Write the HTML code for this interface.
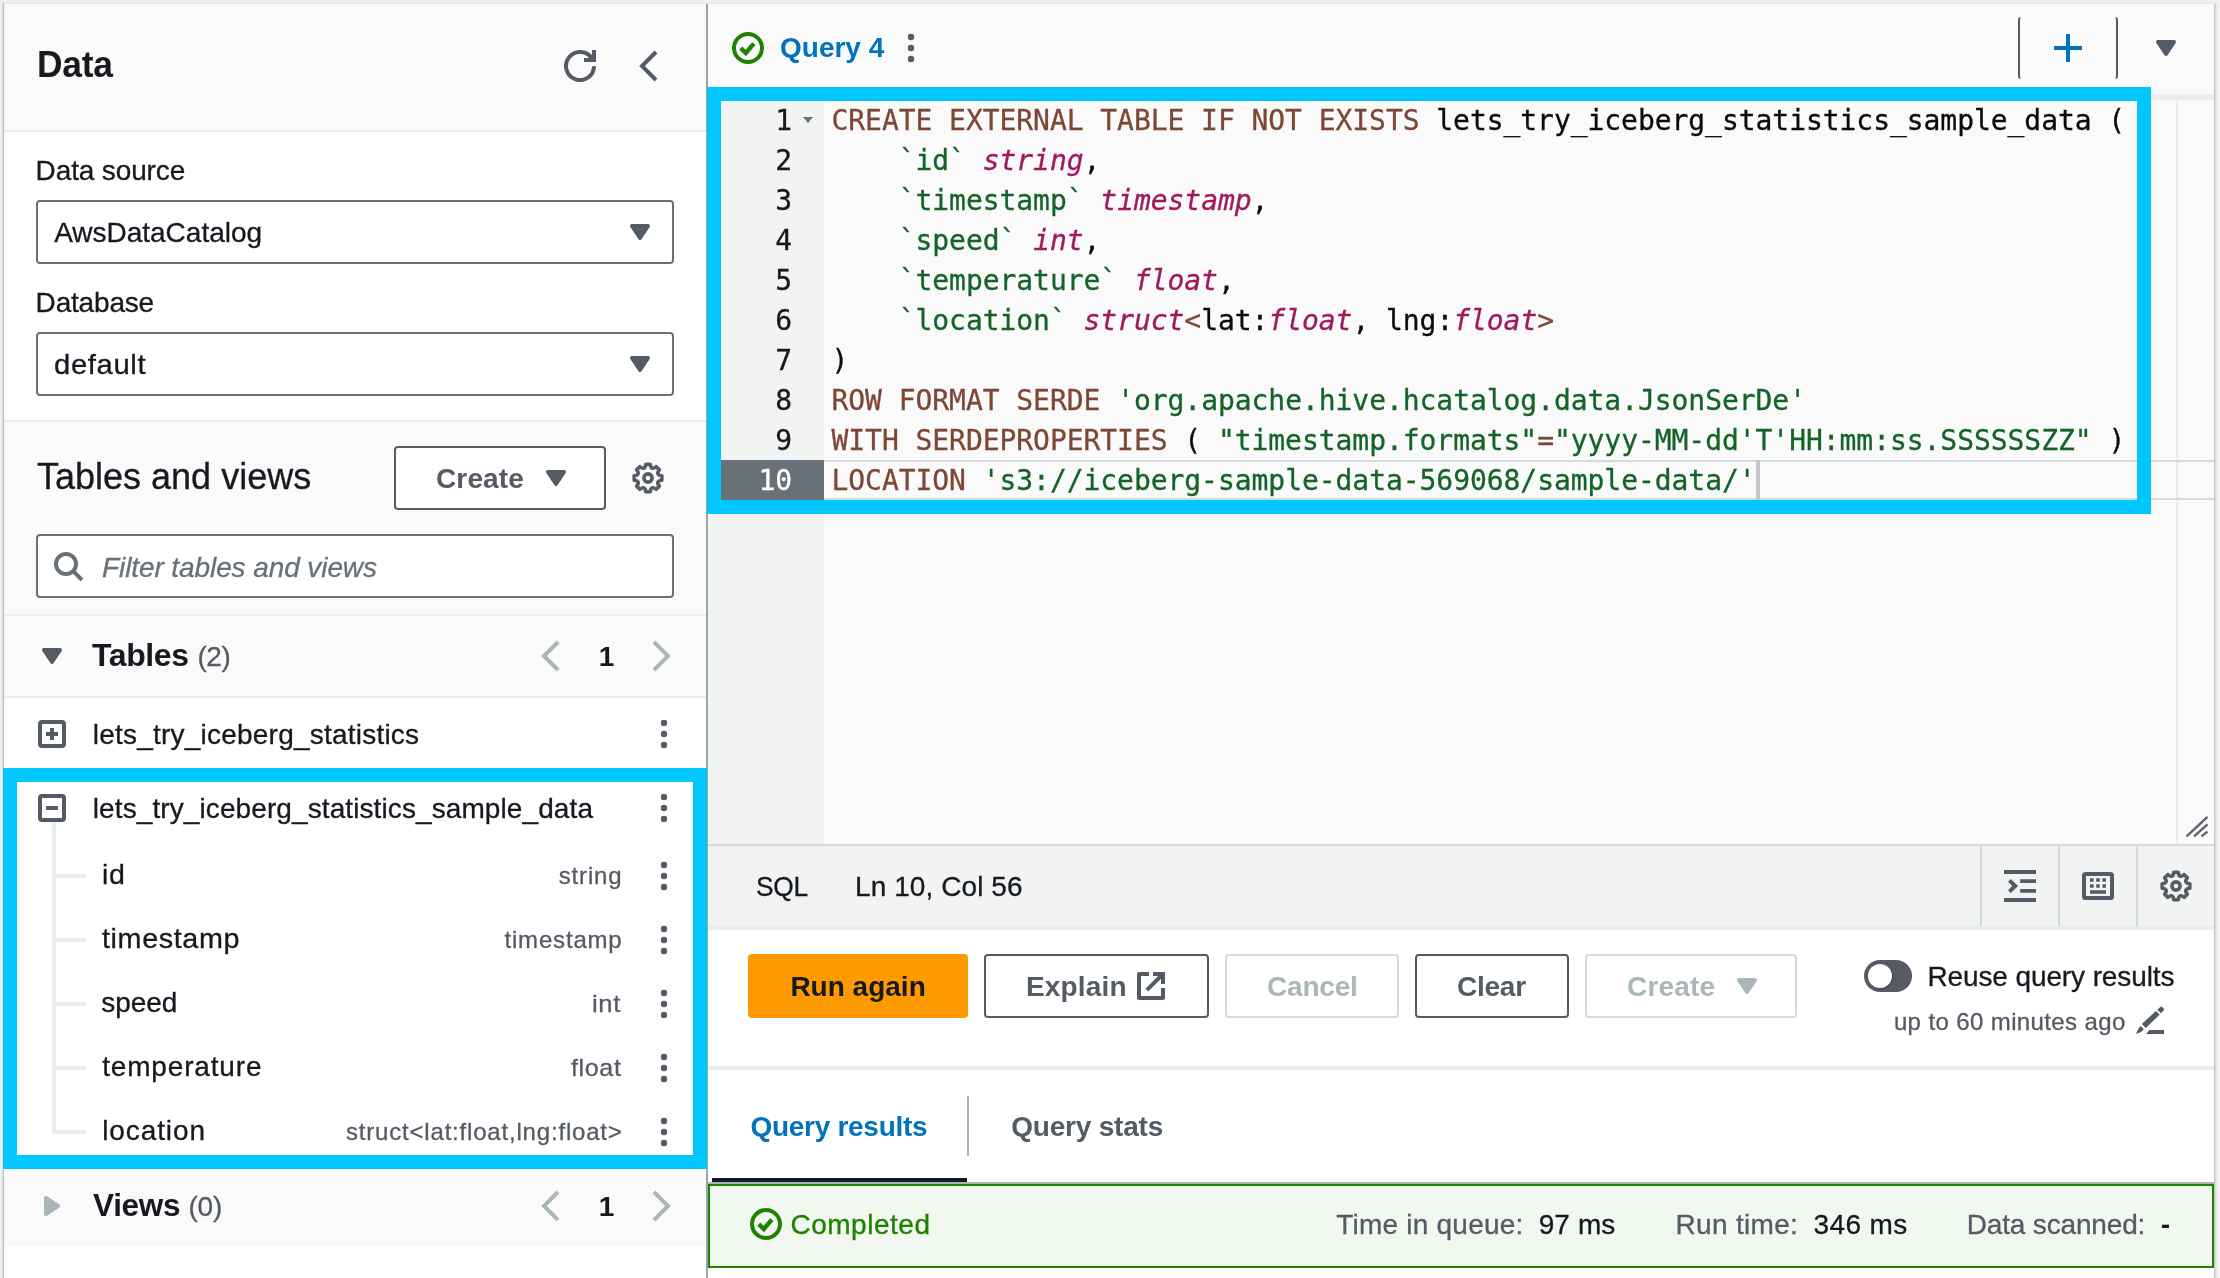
<!DOCTYPE html>
<html lang="en"><head><meta charset="utf-8"><title>Athena query editor</title>
<style>
html,body{margin:0;padding:0}
body{width:2220px;height:1278px;position:relative;overflow:hidden;background:#f0f1f1;font-family:'Liberation Sans', sans-serif}
#app{position:absolute;left:0;top:0;width:2220px;height:1278px;overflow:hidden;will-change:transform;transform:translateZ(0)}
#app>div,#app>svg{position:absolute;box-sizing:border-box}
.t{white-space:pre}
</style></head><body><div id="app">
<div style="left:3px;top:2px;width:2213px;height:2px;background:#e9ebeb"></div>
<div style="left:0px;top:3px;width:4px;height:1275px;background:linear-gradient(90deg,#f0f1f1 0,#eef0f0 1.5px,#dde0e0 2.5px,#b9c0c0 3.5px)"></div>
<div style="left:4px;top:4px;width:702px;height:1274px;background:#fff"></div>
<div style="left:4px;top:4px;width:702px;height:126px;background:#fafafa"></div>
<div style="left:4px;top:130px;width:702px;height:2px;background:#eaeded"></div>
<div style="left:4px;top:420px;width:702px;height:2px;background:#eaeded"></div>
<div style="left:4px;top:422px;width:702px;height:192px;background:#fafafa"></div>
<div style="left:4px;top:614px;width:702px;height:2px;background:#eaeded"></div>
<div style="left:4px;top:616px;width:702px;height:80px;background:#fafafa"></div>
<div style="left:4px;top:696px;width:702px;height:2px;background:#eaeded"></div>
<div style="left:4px;top:1169px;width:702px;height:77px;background:#fafafa"></div>
<div style="left:706px;top:4px;width:2px;height:1274px;background:#9ba7a7"></div>
<svg style="left:564px;top:50px" width="32" height="32" viewBox="0 0 16 16" ><path d="M15 8.1A7 7 0 1 1 14.06 4.5" fill="none" stroke="#545b64" stroke-width="2"/><path d="M15 0v5h-5" fill="none" stroke="#545b64" stroke-width="2"/></svg>
<svg style="left:632px;top:50px" width="32" height="32" viewBox="0 0 16 16" ><path d="M12 1 5 8l7 7" fill="none" stroke="#545b64" stroke-width="2" stroke-linejoin="miter"/></svg>
<div style="left:36px;top:200px;width:638px;height:64px;background:#fff;border:2px solid #687078;border-radius:4px"></div>
<svg style="left:624px;top:216px" width="32" height="32" viewBox="0 0 16 16" ><path d="M4 5h8l-4 6z" fill="#545b64" stroke="#545b64" stroke-width="2" stroke-linejoin="round"/></svg>
<div style="left:36px;top:332px;width:638px;height:64px;background:#fff;border:2px solid #687078;border-radius:4px"></div>
<svg style="left:624px;top:348px" width="32" height="32" viewBox="0 0 16 16" ><path d="M4 5h8l-4 6z" fill="#545b64" stroke="#545b64" stroke-width="2" stroke-linejoin="round"/></svg>
<div style="left:394px;top:446px;width:212px;height:64px;background:#fff;border:2px solid #545b64;border-radius:4px"></div>
<svg style="left:540px;top:462px" width="32" height="32" viewBox="0 0 16 16" ><path d="M4 5h8l-4 6z" fill="#545b64" stroke="#545b64" stroke-width="2" stroke-linejoin="round"/></svg>
<svg style="left:632px;top:462px" width="32" height="32" viewBox="0 0 16 16" ><path d="M6.90 1.09L9.10 1.09Q9.49 4.40 12.11 2.34L13.66 3.89Q11.60 6.51 14.91 6.90L14.91 9.10Q11.60 9.49 13.66 12.11L12.11 13.66Q9.49 11.60 9.10 14.91L6.90 14.91Q6.51 11.60 3.89 13.66L2.34 12.11Q4.40 9.49 1.09 9.10L1.09 6.90Q4.40 6.51 2.34 3.89L3.89 2.34Q6.51 4.40 6.90 1.09Z" fill="none" stroke="#545b64" stroke-width="1.8" stroke-linejoin="round"/><circle cx="8" cy="8" r="2.05" fill="none" stroke="#545b64" stroke-width="1.8"/></svg>
<div style="left:36px;top:534px;width:638px;height:64px;background:#fff;border:2px solid #687078;border-radius:4px"></div>
<svg style="left:52px;top:550px" width="32" height="32" viewBox="0 0 16 16" ><circle cx="7" cy="7" r="5" fill="none" stroke="#687078" stroke-width="2"/><path d="m10.6 10.6 4.4 4.4" stroke="#687078" stroke-width="2" fill="none"/></svg>
<svg style="left:36px;top:640px" width="32" height="32" viewBox="0 0 16 16" ><path d="M4 5h8l-4 6z" fill="#545b64" stroke="#545b64" stroke-width="2" stroke-linejoin="round"/></svg>
<svg style="left:534px;top:640px" width="32" height="32" viewBox="0 0 16 16" ><path d="M12 1 5 8l7 7" fill="none" stroke="#aab7b8" stroke-width="2"/></svg>
<svg style="left:646px;top:640px" width="32" height="32" viewBox="0 0 16 16" ><path d="M4 1l7 7-7 7" fill="none" stroke="#aab7b8" stroke-width="2"/></svg>
<svg style="left:38px;top:720px" width="28" height="28" viewBox="0 0 28 28" ><rect x="2" y="2" width="24" height="24" rx="2" fill="#fff" stroke="#545b64" stroke-width="4"/><path d="M8 14h12M14 8v12" stroke="#545b64" stroke-width="4" fill="none"/></svg>
<svg style="left:660px;top:718px" width="8" height="32" viewBox="0 0 8 32" ><circle cx="4" cy="5" r="3.2" fill="#545b64"/><circle cx="4" cy="16" r="3.2" fill="#545b64"/><circle cx="4" cy="27" r="3.2" fill="#545b64"/></svg>
<div style="left:52px;top:822px;width:4px;height:312px;background:#eaeded"></div>
<div style="left:52px;top:874px;width:34px;height:4px;background:#eaeded"></div>
<div style="left:52px;top:938px;width:34px;height:4px;background:#eaeded"></div>
<div style="left:52px;top:1002px;width:34px;height:4px;background:#eaeded"></div>
<div style="left:52px;top:1066px;width:34px;height:4px;background:#eaeded"></div>
<div style="left:52px;top:1130px;width:34px;height:4px;background:#eaeded"></div>
<svg style="left:38px;top:794px" width="28" height="28" viewBox="0 0 28 28" ><rect x="2" y="2" width="24" height="24" rx="2" fill="#fff" stroke="#545b64" stroke-width="4"/><path d="M8 14h12" stroke="#545b64" stroke-width="4" fill="none"/></svg>
<svg style="left:660px;top:792px" width="8" height="32" viewBox="0 0 8 32" ><circle cx="4" cy="5" r="3.2" fill="#545b64"/><circle cx="4" cy="16" r="3.2" fill="#545b64"/><circle cx="4" cy="27" r="3.2" fill="#545b64"/></svg>
<svg style="left:660px;top:860px" width="8" height="32" viewBox="0 0 8 32" ><circle cx="4" cy="5" r="3.2" fill="#545b64"/><circle cx="4" cy="16" r="3.2" fill="#545b64"/><circle cx="4" cy="27" r="3.2" fill="#545b64"/></svg>
<svg style="left:660px;top:924px" width="8" height="32" viewBox="0 0 8 32" ><circle cx="4" cy="5" r="3.2" fill="#545b64"/><circle cx="4" cy="16" r="3.2" fill="#545b64"/><circle cx="4" cy="27" r="3.2" fill="#545b64"/></svg>
<svg style="left:660px;top:988px" width="8" height="32" viewBox="0 0 8 32" ><circle cx="4" cy="5" r="3.2" fill="#545b64"/><circle cx="4" cy="16" r="3.2" fill="#545b64"/><circle cx="4" cy="27" r="3.2" fill="#545b64"/></svg>
<svg style="left:660px;top:1052px" width="8" height="32" viewBox="0 0 8 32" ><circle cx="4" cy="5" r="3.2" fill="#545b64"/><circle cx="4" cy="16" r="3.2" fill="#545b64"/><circle cx="4" cy="27" r="3.2" fill="#545b64"/></svg>
<svg style="left:660px;top:1116px" width="8" height="32" viewBox="0 0 8 32" ><circle cx="4" cy="5" r="3.2" fill="#545b64"/><circle cx="4" cy="16" r="3.2" fill="#545b64"/><circle cx="4" cy="27" r="3.2" fill="#545b64"/></svg>
<svg style="left:36px;top:1190px" width="32" height="32" viewBox="0 0 16 16" ><path d="M5 4v8l6-4z" fill="#aab7b8" stroke="#aab7b8" stroke-width="2" stroke-linejoin="round"/></svg>
<svg style="left:534px;top:1190px" width="32" height="32" viewBox="0 0 16 16" ><path d="M12 1 5 8l7 7" fill="none" stroke="#aab7b8" stroke-width="2"/></svg>
<svg style="left:646px;top:1190px" width="32" height="32" viewBox="0 0 16 16" ><path d="M4 1l7 7-7 7" fill="none" stroke="#aab7b8" stroke-width="2"/></svg>
<div style="left:708px;top:4px;width:1506px;height:1274px;background:#fff"></div>
<div style="left:708px;top:4px;width:1506px;height:90px;background:#fafafa"></div>
<div style="left:708px;top:94px;width:1506px;height:6px;background:#eaeded"></div>
<svg style="left:732px;top:32px" width="32" height="32" viewBox="0 0 16 16" ><circle cx="8" cy="8" r="7" fill="none" stroke="#1d8102" stroke-width="2"/><path d="M4.4 8.1 6.9 10.5 10.9 5.8" fill="none" stroke="#1d8102" stroke-width="2.2"/></svg>
<svg style="left:907px;top:32px" width="8" height="32" viewBox="0 0 8 32" ><circle cx="4" cy="5" r="3.2" fill="#545b64"/><circle cx="4" cy="16" r="3.2" fill="#545b64"/><circle cx="4" cy="27" r="3.2" fill="#545b64"/></svg>
<div style="left:2018px;top:17px;width:100px;height:62px;border-left:2px solid #545b64;border-right:2px solid #545b64;border-radius:3px"></div>
<svg style="left:2052px;top:32px" width="32" height="32" viewBox="0 0 16 16" ><path d="M8 1v14M1 8h14" stroke="#0073bb" stroke-width="2" fill="none"/></svg>
<svg style="left:2150px;top:32px" width="32" height="32" viewBox="0 0 16 16" ><path d="M4 5h8l-4 6z" fill="#545b64" stroke="#545b64" stroke-width="2" stroke-linejoin="round"/></svg>
<div style="left:708px;top:100px;width:1506px;height:744px;background:#fafafa"></div>
<div style="left:708px;top:100px;width:116px;height:744px;background:#f2f3f3"></div>
<div style="left:2176px;top:100px;width:2px;height:744px;background:#eaeded"></div>
<div style="left:708px;top:460px;width:116px;height:40px;background:#687078"></div>
<div style="left:824px;top:460px;width:1390px;height:2px;background:#d5dbdb"></div>
<div style="left:824px;top:498px;width:1390px;height:2px;background:#d5dbdb"></div>
<div style="left:1756px;top:460px;width:4px;height:40px;background:#c4c7ca"></div>
<div style="left:831.5px;top:101px;height:40px;line-height:40px;white-space:pre;font-family:'DejaVu Sans Mono', 'Liberation Mono', monospace;font-size:28px;letter-spacing:-0.057px;-webkit-text-stroke:0.3px;transform:scaleY(1.03);transform-origin:0 29.7px"><span style="color:#7d4734;">CREATE EXTERNAL TABLE IF NOT EXISTS</span><span style="color:#0b0b0b;"> lets_try_iceberg_statistics_sample_data (</span></div>
<div style="left:720px;top:101px;width:72px;height:40px;line-height:40px;text-align:right;white-space:pre;font-family:'DejaVu Sans Mono', 'Liberation Mono', monospace;font-size:28px;letter-spacing:-0.057px;-webkit-text-stroke:0.3px;transform:scaleY(1.03);transform-origin:0 29.7px;color:#16191f">1</div>
<div style="left:831.5px;top:141px;height:40px;line-height:40px;white-space:pre;font-family:'DejaVu Sans Mono', 'Liberation Mono', monospace;font-size:28px;letter-spacing:-0.057px;-webkit-text-stroke:0.3px;transform:scaleY(1.03);transform-origin:0 29.7px"><span style="color:#146428;">    `id`</span><span style="color:#0b0b0b;"> </span><span style="color:#a0195a;font-style:italic;">string</span><span style="color:#0b0b0b;">,</span></div>
<div style="left:720px;top:141px;width:72px;height:40px;line-height:40px;text-align:right;white-space:pre;font-family:'DejaVu Sans Mono', 'Liberation Mono', monospace;font-size:28px;letter-spacing:-0.057px;-webkit-text-stroke:0.3px;transform:scaleY(1.03);transform-origin:0 29.7px;color:#16191f">2</div>
<div style="left:831.5px;top:181px;height:40px;line-height:40px;white-space:pre;font-family:'DejaVu Sans Mono', 'Liberation Mono', monospace;font-size:28px;letter-spacing:-0.057px;-webkit-text-stroke:0.3px;transform:scaleY(1.03);transform-origin:0 29.7px"><span style="color:#146428;">    `timestamp`</span><span style="color:#0b0b0b;"> </span><span style="color:#a0195a;font-style:italic;">timestamp</span><span style="color:#0b0b0b;">,</span></div>
<div style="left:720px;top:181px;width:72px;height:40px;line-height:40px;text-align:right;white-space:pre;font-family:'DejaVu Sans Mono', 'Liberation Mono', monospace;font-size:28px;letter-spacing:-0.057px;-webkit-text-stroke:0.3px;transform:scaleY(1.03);transform-origin:0 29.7px;color:#16191f">3</div>
<div style="left:831.5px;top:221px;height:40px;line-height:40px;white-space:pre;font-family:'DejaVu Sans Mono', 'Liberation Mono', monospace;font-size:28px;letter-spacing:-0.057px;-webkit-text-stroke:0.3px;transform:scaleY(1.03);transform-origin:0 29.7px"><span style="color:#146428;">    `speed`</span><span style="color:#0b0b0b;"> </span><span style="color:#a0195a;font-style:italic;">int</span><span style="color:#0b0b0b;">,</span></div>
<div style="left:720px;top:221px;width:72px;height:40px;line-height:40px;text-align:right;white-space:pre;font-family:'DejaVu Sans Mono', 'Liberation Mono', monospace;font-size:28px;letter-spacing:-0.057px;-webkit-text-stroke:0.3px;transform:scaleY(1.03);transform-origin:0 29.7px;color:#16191f">4</div>
<div style="left:831.5px;top:261px;height:40px;line-height:40px;white-space:pre;font-family:'DejaVu Sans Mono', 'Liberation Mono', monospace;font-size:28px;letter-spacing:-0.057px;-webkit-text-stroke:0.3px;transform:scaleY(1.03);transform-origin:0 29.7px"><span style="color:#146428;">    `temperature`</span><span style="color:#0b0b0b;"> </span><span style="color:#a0195a;font-style:italic;">float</span><span style="color:#0b0b0b;">,</span></div>
<div style="left:720px;top:261px;width:72px;height:40px;line-height:40px;text-align:right;white-space:pre;font-family:'DejaVu Sans Mono', 'Liberation Mono', monospace;font-size:28px;letter-spacing:-0.057px;-webkit-text-stroke:0.3px;transform:scaleY(1.03);transform-origin:0 29.7px;color:#16191f">5</div>
<div style="left:831.5px;top:301px;height:40px;line-height:40px;white-space:pre;font-family:'DejaVu Sans Mono', 'Liberation Mono', monospace;font-size:28px;letter-spacing:-0.057px;-webkit-text-stroke:0.3px;transform:scaleY(1.03);transform-origin:0 29.7px"><span style="color:#146428;">    `location`</span><span style="color:#0b0b0b;"> </span><span style="color:#a0195a;font-style:italic;">struct</span><span style="color:#7d4734;">&lt;</span><span style="color:#0b0b0b;">lat:</span><span style="color:#a0195a;font-style:italic;">float</span><span style="color:#0b0b0b;">, lng:</span><span style="color:#a0195a;font-style:italic;">float</span><span style="color:#7d4734;">&gt;</span></div>
<div style="left:720px;top:301px;width:72px;height:40px;line-height:40px;text-align:right;white-space:pre;font-family:'DejaVu Sans Mono', 'Liberation Mono', monospace;font-size:28px;letter-spacing:-0.057px;-webkit-text-stroke:0.3px;transform:scaleY(1.03);transform-origin:0 29.7px;color:#16191f">6</div>
<div style="left:831.5px;top:341px;height:40px;line-height:40px;white-space:pre;font-family:'DejaVu Sans Mono', 'Liberation Mono', monospace;font-size:28px;letter-spacing:-0.057px;-webkit-text-stroke:0.3px;transform:scaleY(1.03);transform-origin:0 29.7px"><span style="color:#0b0b0b;">)</span></div>
<div style="left:720px;top:341px;width:72px;height:40px;line-height:40px;text-align:right;white-space:pre;font-family:'DejaVu Sans Mono', 'Liberation Mono', monospace;font-size:28px;letter-spacing:-0.057px;-webkit-text-stroke:0.3px;transform:scaleY(1.03);transform-origin:0 29.7px;color:#16191f">7</div>
<div style="left:831.5px;top:381px;height:40px;line-height:40px;white-space:pre;font-family:'DejaVu Sans Mono', 'Liberation Mono', monospace;font-size:28px;letter-spacing:-0.057px;-webkit-text-stroke:0.3px;transform:scaleY(1.03);transform-origin:0 29.7px"><span style="color:#7d4734;">ROW FORMAT SERDE</span><span style="color:#0b0b0b;"> </span><span style="color:#146428;">&#x27;org.apache.hive.hcatalog.data.JsonSerDe&#x27;</span></div>
<div style="left:720px;top:381px;width:72px;height:40px;line-height:40px;text-align:right;white-space:pre;font-family:'DejaVu Sans Mono', 'Liberation Mono', monospace;font-size:28px;letter-spacing:-0.057px;-webkit-text-stroke:0.3px;transform:scaleY(1.03);transform-origin:0 29.7px;color:#16191f">8</div>
<div style="left:831.5px;top:421px;height:40px;line-height:40px;white-space:pre;font-family:'DejaVu Sans Mono', 'Liberation Mono', monospace;font-size:28px;letter-spacing:-0.057px;-webkit-text-stroke:0.3px;transform:scaleY(1.03);transform-origin:0 29.7px"><span style="color:#7d4734;">WITH SERDEPROPERTIES</span><span style="color:#0b0b0b;"> ( </span><span style="color:#146428;">&quot;timestamp.formats&quot;</span><span style="color:#7d4734;">=</span><span style="color:#146428;">&quot;yyyy-MM-dd&#x27;T&#x27;HH:mm:ss.SSSSSSZZ&quot;</span><span style="color:#0b0b0b;"> )</span></div>
<div style="left:720px;top:421px;width:72px;height:40px;line-height:40px;text-align:right;white-space:pre;font-family:'DejaVu Sans Mono', 'Liberation Mono', monospace;font-size:28px;letter-spacing:-0.057px;-webkit-text-stroke:0.3px;transform:scaleY(1.03);transform-origin:0 29.7px;color:#16191f">9</div>
<div style="left:831.5px;top:461px;height:40px;line-height:40px;white-space:pre;font-family:'DejaVu Sans Mono', 'Liberation Mono', monospace;font-size:28px;letter-spacing:-0.057px;-webkit-text-stroke:0.3px;transform:scaleY(1.03);transform-origin:0 29.7px"><span style="color:#7d4734;">LOCATION</span><span style="color:#0b0b0b;"> </span><span style="color:#146428;">&#x27;s3://iceberg-sample-data-569068/sample-data/&#x27;</span></div>
<div style="left:720px;top:461px;width:72px;height:40px;line-height:40px;text-align:right;white-space:pre;font-family:'DejaVu Sans Mono', 'Liberation Mono', monospace;font-size:28px;letter-spacing:-0.057px;-webkit-text-stroke:0.3px;transform:scaleY(1.03);transform-origin:0 29.7px;color:#fff">10</div>
<svg style="left:802px;top:116px" width="12" height="8" viewBox="0 0 12 8" ><path d="M1 1h10L6 7z" fill="#687078"/></svg>
<svg style="left:2184px;top:814px" width="28" height="28" viewBox="0 0 28 28" ><path d="M2.6 22.4 23.5 2.9M10 22.4 23.5 10.3M17.4 22.4 23.5 17.7" stroke="#5c636b" stroke-width="2.3" fill="none"/></svg>
<div style="left:708px;top:844px;width:1506px;height:2px;background:#d5dbdb"></div>
<div style="left:708px;top:846px;width:1506px;height:80px;background:#f2f3f3"></div>
<div style="left:708px;top:926px;width:1506px;height:4px;background:#eaeded"></div>
<div style="left:1980px;top:846px;width:2px;height:80px;background:#d5dbdb"></div>
<div style="left:2058px;top:846px;width:2px;height:80px;background:#d5dbdb"></div>
<div style="left:2136px;top:846px;width:2px;height:80px;background:#d5dbdb"></div>
<svg style="left:2004px;top:870px" width="32" height="32" viewBox="0 0 16 16" ><path d="M0 1h16M8.1 5.6H16M8.1 10.4H16M0 15h16" stroke="#545b64" stroke-width="1.9" fill="none"/><path d="M2.7 5.2 5.6 8 2.7 10.8" stroke="#545b64" stroke-width="2" fill="none"/></svg>
<svg style="left:2082px;top:870px" width="32" height="32" viewBox="0 0 16 16" ><rect x="1" y="2" width="14" height="12" rx="0.8" fill="none" stroke="#545b64" stroke-width="2"/><path d="M4 5h1.8M7.1 5h1.8M10.2 5H12M4 8h1.8M7.1 8h1.8M10.2 8H12M4 11h8" stroke="#545b64" stroke-width="1.8" fill="none"/></svg>
<svg style="left:2160px;top:870px" width="32" height="32" viewBox="0 0 16 16" ><path d="M6.90 1.09L9.10 1.09Q9.49 4.40 12.11 2.34L13.66 3.89Q11.60 6.51 14.91 6.90L14.91 9.10Q11.60 9.49 13.66 12.11L12.11 13.66Q9.49 11.60 9.10 14.91L6.90 14.91Q6.51 11.60 3.89 13.66L2.34 12.11Q4.40 9.49 1.09 9.10L1.09 6.90Q4.40 6.51 2.34 3.89L3.89 2.34Q6.51 4.40 6.90 1.09Z" fill="none" stroke="#545b64" stroke-width="1.8" stroke-linejoin="round"/><circle cx="8" cy="8" r="2.05" fill="none" stroke="#545b64" stroke-width="1.8"/></svg>
<div style="left:748px;top:954px;width:220px;height:64px;background:#ff9900;border-radius:4px"></div>
<div style="left:984px;top:954px;width:225px;height:64px;background:#fff;border:2px solid #545b64;border-radius:4px"></div>
<svg style="left:1137px;top:972px" width="28" height="28" viewBox="0 0 14 14" ><path d="M6 1H1v12h12V8" fill="none" stroke="#545b64" stroke-width="2" stroke-linejoin="round"/><path d="M8 1h5v5M13 1 4.9 9.1" fill="none" stroke="#545b64" stroke-width="2"/></svg>
<div style="left:1225px;top:954px;width:174px;height:64px;background:#fff;border:2px solid #d5dbdb;border-radius:4px"></div>
<div style="left:1415px;top:954px;width:154px;height:64px;background:#fff;border:2px solid #545b64;border-radius:4px"></div>
<div style="left:1585px;top:954px;width:212px;height:64px;background:#fff;border:2px solid #d5dbdb;border-radius:4px"></div>
<svg style="left:1731px;top:970px" width="32" height="32" viewBox="0 0 16 16" ><path d="M4 5h8l-4 6z" fill="#aab7b8" stroke="#aab7b8" stroke-width="2" stroke-linejoin="round"/></svg>
<div style="left:1864px;top:960px;width:48px;height:32px;background:#545b64;border-radius:16px"></div>
<div style="left:1868px;top:964px;width:24px;height:24px;background:#fff;border-radius:12px;box-shadow:1px 1px 0 rgba(0,0,0,.25)"></div>
<svg style="left:2136px;top:1006px" width="28" height="28" viewBox="0 0 28 28" ><g fill="#545b64"><path d="M21.2 3.8 24.3.9Q25.2.1 26.1.9L27.7 2.5Q28.4 3.4 27.7 4.2L24.9 7.3Z"/><path d="M19.8 5 23.8 8.6 9.7 22 5.8 18Z"/><path d="M4.7 19.8 7.9 23.4Q5 27 0 28 1.5 23 4.7 19.8Z"/><path d="M13.3 24H28v4H10.1Z"/></g></svg>
<div style="left:708px;top:1066px;width:1506px;height:4px;background:#eaeded"></div>
<div style="left:967px;top:1096px;width:2px;height:60px;background:#aab7b8"></div>
<div style="left:712px;top:1178px;width:255px;height:4px;background:#16191f"></div>
<div style="left:708px;top:1182px;width:1506px;height:2px;background:#aab7b8"></div>
<div style="left:708px;top:1184px;width:1506px;height:84px;background:#f2f8f0;border:2px solid #1d8102"></div>
<svg style="left:750px;top:1208px" width="32" height="32" viewBox="0 0 16 16" ><circle cx="8" cy="8" r="7" fill="none" stroke="#1d8102" stroke-width="2"/><path d="M4.4 8.1 6.9 10.5 10.9 5.8" fill="none" stroke="#1d8102" stroke-width="2.2"/></svg>
<div style="left:2214px;top:4px;width:6px;height:1274px;background:linear-gradient(90deg,#bdc4c4 0,#d6dada 1.5px,#eaeded 3px,#f0f1f1 4px)"></div>
<div style="left:707px;top:87px;width:1444px;height:427px;border:14px solid #00c8fc"></div>
<div style="left:3px;top:768px;width:704px;height:401px;border:14px solid #00c8fc"></div>
<div class="t" style="font-family:'Liberation Sans', sans-serif;font-size:36px;font-weight:700;letter-spacing:-0.300px;transform:scaleX(0.9829);transform-origin:0 0;left:36.53px;top:47.00px;line-height:36px;color:#16191f;">Data</div>
<div class="t" style="font-family:'Liberation Sans', sans-serif;font-size:28px;font-weight:400;-webkit-text-stroke:0.3px;letter-spacing:-0.130px;left:35.60px;top:157.00px;line-height:28px;color:#16191f;">Data source</div>
<div class="t" style="font-family:'Liberation Sans', sans-serif;font-size:28px;font-weight:400;-webkit-text-stroke:0.3px;letter-spacing:-0.015px;left:54.20px;top:219.00px;line-height:28px;color:#16191f;">AwsDataCatalog</div>
<div class="t" style="font-family:'Liberation Sans', sans-serif;font-size:28px;font-weight:400;-webkit-text-stroke:0.3px;letter-spacing:-0.186px;left:35.60px;top:289.00px;line-height:28px;color:#16191f;">Database</div>
<div class="t" style="font-family:'Liberation Sans', sans-serif;font-size:28px;font-weight:400;-webkit-text-stroke:0.3px;letter-spacing:0.600px;transform:scaleX(1.0450);transform-origin:0 0;left:53.55px;top:350.70px;line-height:28px;color:#16191f;">default</div>
<div class="t" style="font-family:'Liberation Sans', sans-serif;font-size:36px;font-weight:400;-webkit-text-stroke:0.3px;left:37.00px;top:459.00px;line-height:36px;color:#16191f;">Tables and views</div>
<div class="t" style="font-family:'Liberation Sans', sans-serif;font-size:28px;font-weight:700;letter-spacing:0.140px;left:436.00px;top:464.50px;line-height:28px;color:#545b64;">Create</div>
<div class="t" style="font-family:'Liberation Sans', sans-serif;font-size:28px;font-weight:400;font-style:italic;-webkit-text-stroke:0.3px;letter-spacing:-0.091px;left:102.00px;top:554.00px;line-height:28px;color:#687078;">Filter tables and views</div>
<div class="t" style="font-family:'Liberation Sans', sans-serif;font-size:32px;font-weight:700;letter-spacing:-0.400px;left:92.00px;top:639.00px;line-height:32px;color:#16191f;">Tables</div>
<div class="t" style="font-family:'Liberation Sans', sans-serif;font-size:28px;font-weight:400;-webkit-text-stroke:0.3px;letter-spacing:-0.450px;left:197.40px;top:643.00px;line-height:28px;color:#545b64;">(2)</div>
<div class="t" style="font-family:'Liberation Sans', sans-serif;font-size:28px;font-weight:700;left:598.70px;top:643.00px;line-height:28px;color:#16191f;">1</div>
<div class="t" style="font-family:'Liberation Sans', sans-serif;font-size:28px;font-weight:400;-webkit-text-stroke:0.3px;letter-spacing:0.219px;left:92.80px;top:720.50px;line-height:28px;color:#16191f;">lets_try_iceberg_statistics</div>
<div class="t" style="font-family:'Liberation Sans', sans-serif;font-size:28px;font-weight:400;-webkit-text-stroke:0.3px;letter-spacing:0.097px;left:92.80px;top:794.50px;line-height:28px;color:#16191f;">lets_try_iceberg_statistics_sample_data</div>
<div class="t" style="font-family:'Liberation Sans', sans-serif;font-size:28px;font-weight:400;-webkit-text-stroke:0.3px;letter-spacing:0.600px;transform:scaleX(1.0194);transform-origin:0 0;left:102.48px;top:861.00px;line-height:28px;color:#16191f;">id</div>
<div class="t" style="font-family:'Liberation Sans', sans-serif;font-size:24px;font-weight:400;-webkit-text-stroke:0.3px;letter-spacing:0.860px;left:558.70px;top:864.00px;line-height:24px;color:#545b64;">string</div>
<div class="t" style="font-family:'Liberation Sans', sans-serif;font-size:28px;font-weight:400;-webkit-text-stroke:0.3px;letter-spacing:0.600px;transform:scaleX(1.0264);transform-origin:0 0;left:102.20px;top:925.00px;line-height:28px;color:#16191f;">timestamp</div>
<div class="t" style="font-family:'Liberation Sans', sans-serif;font-size:24px;font-weight:400;-webkit-text-stroke:0.3px;letter-spacing:0.812px;left:504.50px;top:928.00px;line-height:24px;color:#545b64;">timestamp</div>
<div class="t" style="font-family:'Liberation Sans', sans-serif;font-size:28px;font-weight:400;-webkit-text-stroke:0.3px;letter-spacing:-0.050px;left:101.20px;top:989.00px;line-height:28px;color:#16191f;">speed</div>
<div class="t" style="font-family:'Liberation Sans', sans-serif;font-size:24px;font-weight:400;-webkit-text-stroke:0.3px;letter-spacing:0.600px;transform:scaleX(1.0687);transform-origin:0 0;left:591.93px;top:992.00px;line-height:24px;color:#545b64;">int</div>
<div class="t" style="font-family:'Liberation Sans', sans-serif;font-size:28px;font-weight:400;-webkit-text-stroke:0.3px;letter-spacing:0.830px;left:102.20px;top:1053.00px;line-height:28px;color:#16191f;">temperature</div>
<div class="t" style="font-family:'Liberation Sans', sans-serif;font-size:24px;font-weight:400;-webkit-text-stroke:0.3px;letter-spacing:0.600px;transform:scaleX(1.0434);transform-origin:0 0;left:570.50px;top:1056.00px;line-height:24px;color:#545b64;">float</div>
<div class="t" style="font-family:'Liberation Sans', sans-serif;font-size:28px;font-weight:400;-webkit-text-stroke:0.3px;letter-spacing:0.900px;left:102.20px;top:1117.00px;line-height:28px;color:#16191f;">location</div>
<div class="t" style="font-family:'Liberation Sans', sans-serif;font-size:24px;font-weight:400;-webkit-text-stroke:0.3px;letter-spacing:0.808px;left:346.00px;top:1120.00px;line-height:24px;color:#545b64;">struct&lt;lat:float,lng:float&gt;</div>
<div class="t" style="font-family:'Liberation Sans', sans-serif;font-size:32px;font-weight:700;letter-spacing:-0.300px;transform:scaleX(0.9841);transform-origin:0 0;left:92.60px;top:1188.70px;line-height:32px;color:#16191f;">Views</div>
<div class="t" style="font-family:'Liberation Sans', sans-serif;font-size:28px;font-weight:400;-webkit-text-stroke:0.3px;letter-spacing:-0.250px;left:188.50px;top:1192.70px;line-height:28px;color:#545b64;">(0)</div>
<div class="t" style="font-family:'Liberation Sans', sans-serif;font-size:28px;font-weight:700;left:598.70px;top:1193.00px;line-height:28px;color:#16191f;">1</div>
<div class="t" style="font-family:'Liberation Sans', sans-serif;font-size:28px;font-weight:700;left:780.00px;top:34.00px;line-height:28px;color:#0073bb;">Query 4</div>
<div class="t" style="font-family:'Liberation Sans', sans-serif;font-size:28px;font-weight:400;-webkit-text-stroke:0.3px;letter-spacing:-0.300px;transform:scaleX(0.9393);transform-origin:0 0;left:755.96px;top:873.00px;line-height:28px;color:#16191f;">SQL</div>
<div class="t" style="font-family:'Liberation Sans', sans-serif;font-size:28px;font-weight:400;-webkit-text-stroke:0.3px;letter-spacing:0.083px;left:855.00px;top:873.00px;line-height:28px;color:#16191f;">Ln 10, Col 56</div>
<div class="t" style="font-family:'Liberation Sans', sans-serif;font-size:28px;font-weight:700;left:790.40px;top:972.60px;line-height:28px;color:#16191f;">Run again</div>
<div class="t" style="font-family:'Liberation Sans', sans-serif;font-size:28px;font-weight:700;letter-spacing:0.167px;left:1026.00px;top:972.50px;line-height:28px;color:#545b64;">Explain</div>
<div class="t" style="font-family:'Liberation Sans', sans-serif;font-size:28px;font-weight:700;letter-spacing:-0.200px;left:1267.00px;top:972.50px;line-height:28px;color:#aab7b8;">Cancel</div>
<div class="t" style="font-family:'Liberation Sans', sans-serif;font-size:28px;font-weight:700;letter-spacing:-0.250px;left:1457.00px;top:972.50px;line-height:28px;color:#545b64;">Clear</div>
<div class="t" style="font-family:'Liberation Sans', sans-serif;font-size:28px;font-weight:700;letter-spacing:0.200px;left:1627.00px;top:972.50px;line-height:28px;color:#aab7b8;">Create</div>
<div class="t" style="font-family:'Liberation Sans', sans-serif;font-size:28px;font-weight:400;-webkit-text-stroke:0.3px;letter-spacing:-0.106px;left:1927.40px;top:962.80px;line-height:28px;color:#16191f;">Reuse query results</div>
<div class="t" style="font-family:'Liberation Sans', sans-serif;font-size:24px;font-weight:400;-webkit-text-stroke:0.3px;letter-spacing:0.384px;left:1893.90px;top:1010.00px;line-height:24px;color:#545b64;">up to 60 minutes ago</div>
<div class="t" style="font-family:'Liberation Sans', sans-serif;font-size:28px;font-weight:700;letter-spacing:-0.275px;left:750.40px;top:1113.00px;line-height:28px;color:#0073bb;">Query results</div>
<div class="t" style="font-family:'Liberation Sans', sans-serif;font-size:28px;font-weight:700;letter-spacing:-0.210px;left:1011.30px;top:1113.00px;line-height:28px;color:#545b64;">Query stats</div>
<div class="t" style="font-family:'Liberation Sans', sans-serif;font-size:28px;font-weight:400;-webkit-text-stroke:0.3px;letter-spacing:0.525px;left:790.40px;top:1210.50px;line-height:28px;color:#1d8102;">Completed</div>
<div class="t" style="font-family:'Liberation Sans', sans-serif;font-size:28px;font-weight:400;-webkit-text-stroke:0.3px;letter-spacing:0.231px;left:1336.20px;top:1210.70px;line-height:28px;color:#545b64;">Time in queue:</div>
<div class="t" style="font-family:'Liberation Sans', sans-serif;font-size:28px;font-weight:400;-webkit-text-stroke:0.3px;letter-spacing:0.100px;left:1538.70px;top:1210.70px;line-height:28px;color:#16191f;">97 ms</div>
<div class="t" style="font-family:'Liberation Sans', sans-serif;font-size:28px;font-weight:400;-webkit-text-stroke:0.3px;letter-spacing:0.300px;left:1675.60px;top:1210.70px;line-height:28px;color:#545b64;">Run time:</div>
<div class="t" style="font-family:'Liberation Sans', sans-serif;font-size:28px;font-weight:400;-webkit-text-stroke:0.3px;letter-spacing:0.380px;left:1813.60px;top:1210.70px;line-height:28px;color:#16191f;">346 ms</div>
<div class="t" style="font-family:'Liberation Sans', sans-serif;font-size:28px;font-weight:400;-webkit-text-stroke:0.3px;letter-spacing:-0.158px;left:1966.70px;top:1210.70px;line-height:28px;color:#545b64;">Data scanned:</div>
<div class="t" style="font-family:'Liberation Sans', sans-serif;font-size:28px;font-weight:700;left:2160.80px;top:1210.70px;line-height:28px;color:#16191f;">-</div>
</div></body></html>
